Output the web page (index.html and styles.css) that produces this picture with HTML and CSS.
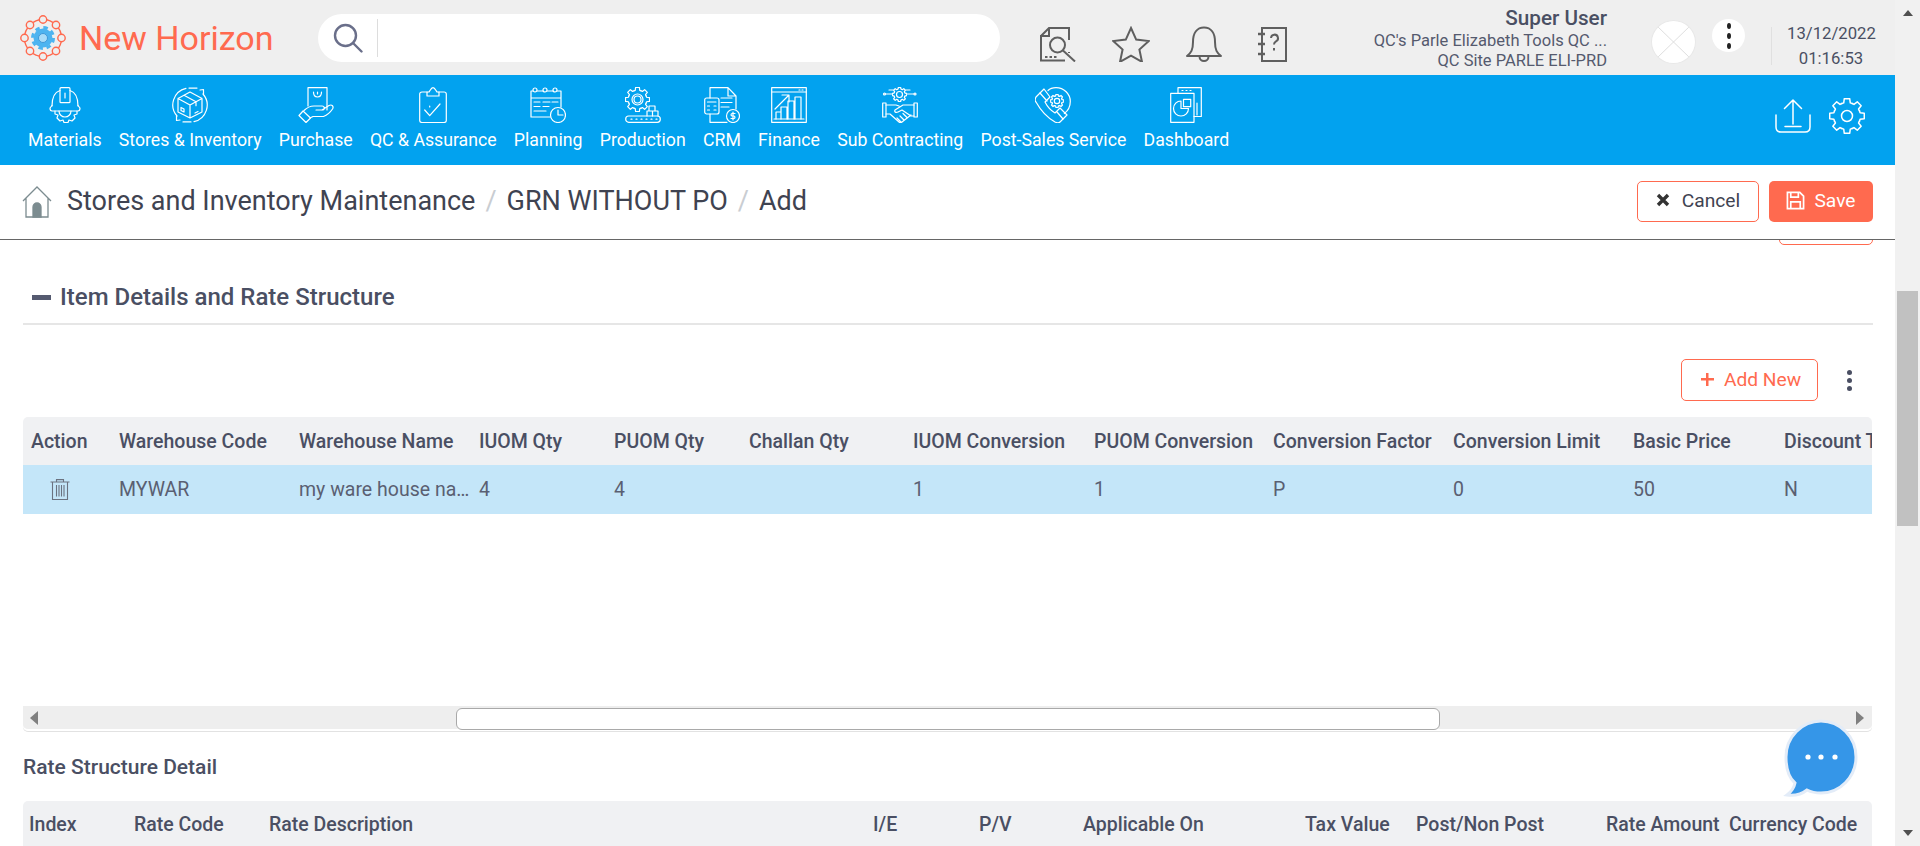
FILE: index.html
```html
<!DOCTYPE html>
<html lang="en">
<head>
<meta charset="utf-8">
<title>GRN WITHOUT PO</title>
<link rel="stylesheet" href="styles.css">
</head>
<body>
<svg class="defs" aria-hidden="true">
  <symbol id="cog" viewBox="0 0 36 36">
    <g class="cog-seg">
      <path id="cog-t" d="M12.830 5.530L14.730 4.900 15.260.720H20.740L21.270 4.900 23.170 5.530"/>
      <use href="#cog-t" transform="rotate(45 18 18)"/><use href="#cog-t" transform="rotate(90 18 18)"/><use href="#cog-t" transform="rotate(135 18 18)"/><use href="#cog-t" transform="rotate(180 18 18)"/><use href="#cog-t" transform="rotate(225 18 18)"/><use href="#cog-t" transform="rotate(270 18 18)"/><use href="#cog-t" transform="rotate(315 18 18)"/>
    </g>
  </symbol>
</svg>
<div class="app">
<header class="topbar">
  <div class="brand">
    <svg class="logo" viewBox="0 0 46 46" fill="none" stroke="#ff6a4f" stroke-width="1.400">
      <circle cx="23" cy="23" r="18.500"/>
      <g fill="#efefef"><circle cx="23" cy="4.500" r="3.700"/><circle cx="23" cy="41.500" r="3.700"/><circle cx="4.500" cy="23" r="3.700"/><circle cx="41.500" cy="23" r="3.700"/><circle cx="10" cy="10" r="3.700"/><circle cx="36" cy="10" r="3.700"/><circle cx="10" cy="36" r="3.700"/><circle cx="36" cy="36" r="3.700"/></g>
      <circle cx="23" cy="23" r="10.500" stroke="#4db4f0" stroke-width="3" stroke-dasharray="4.500 3.750"/>
      <circle cx="23" cy="23" r="9.500" fill="#4db4f0" stroke="none"/>
      <circle cx="23" cy="23" r="4.500" fill="#a9dcf8" stroke="#3f98d8" stroke-width="1"/>
    </svg>
    <span class="brand-name">New Horizon</span>
  </div>
  <div class="search">
    <svg class="search-icon" viewBox="0 0 30 30" fill="none" stroke="#6a6f8a" stroke-width="2.400"><circle cx="12.500" cy="12.500" r="10.500"/><path d="M20 20l8.500 8.500" stroke-linecap="round"/></svg>
    <span class="search-sep"></span>
  </div>
  <div class="tools">
    <svg class="tool tool-doc" viewBox="0 0 37 36" fill="none" stroke="#5f5f5f" stroke-width="2"><path d="M1 10L9 2H29V14M29 26V27M25 34.500H1V10H9V2"/><circle cx="17.500" cy="19" r="7.500"/><path d="M23 24.500L35 35.500"/><path d="M5 31h2.500M9.500 31H12M14 31h2.500"/></svg>
    <svg class="tool tool-star" viewBox="0 0 38 36" fill="none" stroke="#5f5f5f" stroke-width="2"><path d="M19 2l5.200 11.600 12.600 1.400-9.400 8.500 2.600 12.400L19 29.600 8 35.900l2.600-12.400L1.200 15l12.600-1.400z"/></svg>
    <svg class="tool tool-bell" viewBox="0 0 36 36" fill="none" stroke="#5f5f5f" stroke-width="2" stroke-linejoin="round"><path d="M1 30c4-3 6-6 6-14C7 7 11 1.500 18 1.500S29 7 29 16c0 8 2 11 6 14z"/><path d="M13.500 30.500a4.500 4.500 0 0 0 9 0"/></svg>
    <svg class="tool tool-book" viewBox="0 0 30 36" fill="none" stroke="#5f5f5f" stroke-width="2"><path d="M4 2h24v33H4z"/><path d="M0 8h7M0 18h7M0 28h7" stroke-width="2.400"/><path d="M13 12a3.500 3.500 0 1 1 5 3.300c-1.200.7-2 1.500-2 3.200"/><path d="M16 22v2.500"/></svg>
  </div>
  <div class="user">
    <div class="user-name">Super User</div>
    <div class="user-line">QC's Parle Elizabeth Tools QC ...</div>
    <div class="user-line">QC Site PARLE ELI-PRD</div>
  </div>
  <div class="avatar">
    <svg viewBox="0 0 45 44" fill="none" stroke="#dcdcdc" stroke-width="1"><path d="M6 6l33 32M39 6L6 38"/></svg>
  </div>
  <div class="kebab-round"><i></i><i></i><i></i></div>
  <div class="clock"><div>13/12/2022</div><div>01:16:53</div></div>
</header>

<nav class="mainnav">
  <a class="nav-item"><svg viewBox="0 0 32 36" class="ni w32"><path d="M11 3.500C6 5 3 10 3 19M21 3.500C26 5 29 10 29 19"/><rect x="11" y=".7" width="10" height="15" rx="1"/><path d="M16 6v5"/><path d="M3 18.500L1 21c0 2 1 3 2 3h26c1 0 2-1 2-3l-2-2.500"/><path d="M6 24v3l3 1-1 3 3 3 3-1 1 2.500h4l1-2.500 3 1 3-3-1-3 3-1v-3M10 24a6 6 0 0 0 12 0"/></svg><span>Materials</span></a>
  <a class="nav-item"><svg viewBox="0 0 36 36" class="ni w36"><path d="M14 1.300A17 17 0 0 0 5 29M22 34.700A17 17 0 0 0 31 7"/><path d="M17 1.100h8M28 3l3.500-.5V7M19 34.900h-8M8 33l-3.500.5V29"/><path d="M18 5l12 6.500V25l-12 6-12-6V11.500zM6 11.500L18 18l12-6.500M18 18v13M12 8.200l12 6.500v4"/><path d="M9 20.500v3l3 1.500v-3zM23 26l3-1.500"/></svg><span>Stores &amp; Inventory</span></a>
  <a class="nav-item"><svg viewBox="0 0 36 36" class="ni w36"><path d="M10 19V.7H29V23"/><path d="M15.500 5c0 3 1.500 5 4 5s4-2 4-5M19.500 5v2"/><path d="M1 28.500l4-4.500 7.500 7-4.500 4.500z"/><path d="M6 23.500C9 20.500 12 19 16 19h8c3 0 3 4 0 4h-6M24 23l7-4.500c3-1.500 5 1 3.500 3.500-2 3-5 6-9 7.500H15l-3 1.500"/></svg><span>Purchase</span></a>
  <a class="nav-item"><svg viewBox="0 0 28 36" class="ni w28"><path d="M8 5H3C1.500 5 .7 6 .7 7v26.500c0 1 1 2 2.300 2h22c1.300 0 2.300-1 2.300-2V7c0-1-.8-2-2.300-2h-5"/><path d="M8 9V5h2c1-1 2-4.300 4-4.300S17 4 18 5h2v4z"/><path d="M5.700 23l5 5.700L21 17M10.700 19v1"/></svg><span>QC &amp; Assurance</span></a>
  <a class="nav-item"><svg viewBox="0 0 36 36" class="ni w36"><path d="M20 30H1V4H31V20M1 11H31"/><circle cx="5" cy="3" r="2" class="fb"/><circle cx="15" cy="3" r="2" class="fb"/><circle cx="25" cy="3" r="2" class="fb"/><path d="M4 15h6M13 15h7M22 15h6M4 19.500h6M13 19.500h6M4 24h12"/><circle cx="28" cy="28" r="7.500"/><path d="M28 23v5h5"/></svg><span>Planning</span></a>
  <a class="nav-item"><svg viewBox="0 0 36 36" class="ni w36"><use href="#cog" x="0" y="0" width="25" height="25"/><circle cx="12.500" cy="12.500" r="5.500"/><circle cx="12.500" cy="12.500" r="3.500"/><rect x=".7" y="29" width="34.600" height="6.300" rx="3"/><path d="M6 32.200h1M11 32.200h1M16 32.200h1M21 32.200h1M26 32.200h1M31 32.200h1"/><path d="M22 29v-5h5.500v5M27.500 29v-5H33v5M24 24v-5h6v5"/></svg><span>Production</span></a>
  <a class="nav-item"><svg viewBox="0 0 36 36" class="ni w36"><path d="M6 11V.7H24L32 9V22M24 .7V9H32M23 35.300H6V27"/><rect x=".7" y="11" width="14.300" height="16" rx="2"/><path d="M3.500 15h8.500M3.500 19h2M10 19h2M3.500 23h2M10 23h2M17 11h11M17 15.500h11M17 20h8"/><circle cx="29" cy="29" r="6.500"/><path d="M31 26.500h-3a1.300 1.300 0 0 0 0 2.500h2a1.300 1.300 0 0 1 0 2.500h-3M29 25v8"/></svg><span>CRM</span></a>
  <a class="nav-item"><svg viewBox="0 0 36 36" class="ni w36"><rect x=".7" y=".7" width="34.600" height="34.600"/><path d="M.7 5H35.300M28 3h1M31 3h1M3 32H33"/><path d="M5 32V25h5v7M10 32V20h6v12M17 32V14h6v18M24 32V10h6v22"/><path d="M4 22L17 9M11 8h7v7"/></svg><span>Finance</span></a>
  <a class="nav-item"><svg viewBox="0 0 36 36" class="ni w36"><use href="#cog" x="10" y="0" width="15" height="15"/><circle cx="17.500" cy="7.500" r="3"/><path d="M3 7h7M25 7h7M7 3h4M24 3h4"/><circle cx="2.500" cy="7" r="1"/><circle cx="33" cy="7" r="1"/><rect x=".7" y="16" width="3.300" height="14"/><rect x="32" y="16" width="3.300" height="14"/><path d="M4 18h10l3 1M32 18H21l-8 5c-1 2 1 3 3 2l4-2 9 6h3M4 27h4l9 8c1 1 2 1 3 0l9-7M19 35l-4-4M22 33l-4-4M25 30.500l-4-4"/></svg><span>Sub Contracting</span></a>
  <a class="nav-item"><svg viewBox="0 0 36 36" class="ni w36"><path d="M9 2L1 10C0 12 0 14 1 15c5 9 12 16 19 20 2 1 4 1 5 0l7-7-7-7-5 5c-5-3-8-7-10-11l5-5z"/><path d="M5 6l7 8M22 25l6 7"/><path d="M13 3.500C15 1.500 18 .7 21 .7 29 .7 35.300 7 35.300 14.500c0 5-2 9-6 12"/><use href="#cog" x="15" y="7" width="14" height="14"/><circle cx="22" cy="14" r="2.700"/></svg><span>Post-Sales Service</span></a>
  <a class="nav-item"><svg viewBox="0 0 32 36" class="ni w32"><rect x=".7" y="6.300" width="23.300" height="29"/><path d="M8 6V.7H31.300V29.500H24M12 3.500h1M16 3.500h1M20 3.500h1M27 16v12"/><path d="M11 14a7.500 7.500 0 1 0 7.500 7.500H11z"/><path d="M13.500 12.300h7.200v7.400h-7.200z"/></svg><span>Dashboard</span></a>
  <div class="nav-actions">
    <svg class="na na-up" viewBox="0 0 36 34"><path d="M18 25V1M9.500 9.500L18 1l8.500 8.500M10 27.500h16M1 16v12c0 3 2 5 5 5h24c3 0 5-2 5-5V16"/></svg>
    <svg class="na na-gear" viewBox="0 0 36 36"><use href="#cog"/><circle cx="18" cy="18" r="5.500"/></svg>
  </div>
</nav>

<div class="crumbbar">
  <svg class="home" viewBox="0 0 30 32" fill="none" stroke="#7c8c90" stroke-width="1.300"><path d="M1 15L15 1l14 14M4 12v19h22V12"/><path d="M11 31V21a4 4 0 0 1 8 0v10z" fill="#7c8c90"/></svg>
  <span class="crumb">Stores and Inventory Maintenance</span><span class="slash">/</span><span class="crumb">GRN WITHOUT PO</span><span class="slash">/</span><span class="crumb">Add</span>
  <div class="crumb-actions">
    <button class="btn btn-outline"><svg class="btn-x" viewBox="0 0 14 14"><path d="M2 2l10 10M12 2L2 12"/></svg>Cancel</button>
    <button class="btn btn-solid"><svg class="btn-save" viewBox="0 0 20 20" fill="none" stroke="#fff" stroke-width="1.800"><path d="M1.500 1.500h13l4 4v13h-17z"/><path d="M5 1.500v5h8v-5M5 18.500v-7h10v7"/></svg>Save</button>
  </div>
</div>

<main class="content">
  <div class="cutoff"></div>
  <div class="section-head"><span class="minus"></span><h2>Item Details and Rate Structure</h2></div>
  <div class="grid-tools">
    <button class="btn-add"><span class="plus"></span>Add New</button>
    <div class="kebab"><i></i><i></i><i></i></div>
  </div>
  <div class="table-wrap">
    <div class="row head items-row">
      <span class="c c-action">Action</span><span class="c c-wc">Warehouse Code</span><span class="c c-wn">Warehouse Name</span><span class="c c-iq">IUOM Qty</span><span class="c c-pq">PUOM Qty</span><span class="c c-cq">Challan Qty</span><span class="c c-ic">IUOM Conversion</span><span class="c c-pc">PUOM Conversion</span><span class="c c-cf">Conversion Factor</span><span class="c c-cl">Conversion Limit</span><span class="c c-bp">Basic Price</span><span class="c c-dt">Discount T</span>
    </div>
    <div class="row body items-row">
      <span class="c c-action"><svg class="trash" viewBox="0 0 20 21" fill="none" stroke="#6b7280" stroke-width="1.100"><path d="M.5 3h19M6.500 3V.6h7V3M2.500 3v17.500h15V3M6.500 6v11.500M9 6v11.500M11.500 6v11.500M14 6v11.500"/></svg></span><span class="c c-wc">MYWAR</span><span class="c c-wn">my ware house na…</span><span class="c c-iq">4</span><span class="c c-pq">4</span><span class="c c-cq"></span><span class="c c-ic">1</span><span class="c c-pc">1</span><span class="c c-cf">P</span><span class="c c-cl">0</span><span class="c c-bp">50</span><span class="c c-dt">N</span>
    </div>
    <div class="blank"></div>
    <div class="hscroll">
      <span class="arr arr-l"></span>
      <div class="hthumb"></div>
      <span class="arr arr-r"></span>
    </div>
  </div>
  <h3 class="sub">Rate Structure Detail</h3>
  <div class="row head rate-row">
    <span class="c">Index</span><span class="c">Rate Code</span><span class="c">Rate Description</span><span class="c">I/E</span><span class="c">P/V</span><span class="c">Applicable On</span><span class="c">Tax Value</span><span class="c">Post/Non Post</span><span class="c">Rate Amount</span><span class="c">Currency Code</span>
  </div>
</main>
<aside class="chat"><svg viewBox="0 0 76 78"><path d="M38 2c19 0 35 16 35 36S57 74 38 74c-5 0-10-1-14-3-5 4-12 6-20 5 4-3 7-7 8-12C5 58 3 48 3 38 3 18 19 2 38 2z" fill="#3596e8" stroke="#e3ecf8" stroke-width="3"/><g fill="#fff"><circle cx="25" cy="38" r="2.600"/><circle cx="38" cy="38" r="2.600"/><circle cx="52" cy="38" r="2.600"/></g></svg></aside>
</div>
<div class="vscroll"><span class="va va-up"></span><div class="vthumb"></div><span class="va va-down"></span></div>
</body>
</html>
```
FILE: styles.css
```css
* { box-sizing: border-box; }
html, body { margin: 0; height: 846px; overflow: hidden; background: #fff; }
body { display: flex; font-family: Roboto, "Liberation Sans", sans-serif; color: #4a4f63; position: relative; }
.defs { position: absolute; width: 0; height: 0; }
.cog-seg { fill: none; vector-effect: non-scaling-stroke; }
.cog-seg path { vector-effect: non-scaling-stroke; }
.app { width: 1895px; flex: none; height: 846px; overflow: hidden; position: relative; }

.topbar { height: 75px; width: 1920px; background: #efefef; display: flex; align-items: flex-start; position: relative; }
.brand { display: flex; align-items: center; margin: 15px 0 0 20px; width: 298px; flex: none; }
.logo { width: 46px; height: 46px; flex: none; }
.brand-name { font-size: 34px; color: #ff6a4f; margin-left: 13px; line-height: 46px; }
.search { width: 682px; height: 48px; margin-top: 14px; background: #fff; border-radius: 24px; display: flex; align-items: center; padding-left: 15px; flex: none; }
.search-icon { width: 30px; height: 30px; }
.search-sep { width: 1px; height: 38px; background: #ddd; margin-left: 14px; }
.tools { display: flex; margin: 26px 0 0 40px; align-items: center; flex: none; }
.tool { height: 36px; flex: none; }
.tool-doc { width: 37px; }
.tool-star { width: 38px; margin-left: 35px; }
.tool-bell { width: 36px; margin-left: 36px; }
.tool-book { width: 30px; margin-left: 36px; }
.user { width: 319px; text-align: right; flex: none; }
.user-name { font-size: 20.700px; font-weight: 500; line-height: 25px; margin-top: 6px; color: #4a4f63; }
.user-line { font-size: 16.500px; line-height: 20px; color: #555a6e; white-space: nowrap; }
.avatar { width: 45px; height: 44px; border-radius: 50%; background: #fff; margin: 20px 0 0 44px; flex: none; border: 1px solid #e8e8e8; overflow: hidden; }
.avatar svg { display: block; width: 100%; height: 100%; }
.kebab-round { width: 33px; height: 33px; border-radius: 50%; background: #fff; margin: 19px 0 0 16px; display: flex; flex-direction: column; align-items: center; justify-content: center; gap: 4px; flex: none; }
.kebab-round i { width: 4px; height: 6px; border-radius: 50%; background: #222; }
.clock { margin: 27px 0 0 26px; border-left: 1px solid #e0e0e0; height: 38px; width: 103px; padding-left: 15px; font-size: 16.700px; color: #4a4f63; flex: none; }
.clock div { line-height: 25px; text-align: center; width: 88px; }
.clock div:first-child { margin-top: -6px; }

.mainnav { height: 90px; width: 100%; background: #02a2ef; display: flex; padding: 12px 0 0 28px; gap: 17.250px; position: relative; }
.nav-item { display: flex; flex-direction: column; align-items: center; color: #fff; font-size: 17.700px; flex: none; }
.nav-item span { margin-top: 7px; line-height: 20px; white-space: nowrap; }
.ni { height: 36px; flex: none; fill: none; stroke: #fff; stroke-width: 1.200; stroke-linejoin: round; stroke-linecap: round; }
.ni.w28 { width: 28px; }
.ni.w32 { width: 32px; }
.ni.w36 { width: 36px; }
.fb { fill: #02a2ef; }
.nav-actions { margin-left: auto; display: flex; padding: 12px 30px 0 0; gap: 18px; align-items: flex-start; }
.na { fill: none; stroke: #fff; stroke-width: 1.500; stroke-linecap: round; stroke-linejoin: round; }
.na-up { width: 36px; height: 34px; }
.na-gear { width: 36px; height: 36px; margin-top: -1px; }

.crumbbar { height: 75px; display: flex; align-items: center; padding: 0 22px; border-bottom: 1px solid #666; font-size: 27px; color: #3f4351; position: relative; z-index: 1; background: #fff; }
.home { width: 30px; height: 32px; margin-right: 15px; flex: none; }
.crumb { white-space: nowrap; position: relative; top: -1px; }
.slash { color: #c9cdd2; margin: 0 10px; position: relative; top: -1px; }
.crumb-actions { margin-left: auto; display: flex; gap: 10px; padding-bottom: 2px; }
.btn { height: 41px; padding: 0 0 2px; border-radius: 5px; font: 400 19.200px Roboto, "Liberation Sans", sans-serif; display: flex; align-items: center; justify-content: center; }
.btn-outline { width: 122px; background: #fff; border: 1px solid #ff6a4f; color: #3f4351; }
.btn-x { width: 14px; height: 14px; margin-right: 12px; fill: none; stroke: #333; stroke-width: 3.400; }
.btn-solid { width: 104px; background: #ff6a4f; border: 0; color: #fff; }
.btn-save { width: 19px; height: 19px; margin-right: 9px; }

.content { position: relative; padding: 0 23px; height: 606px; }
.cutoff { position: absolute; right: 22px; top: -30px; width: 94px; height: 35px; border: 1px solid #ff6a4f; border-radius: 5px; }
.section-head { height: 85px; padding: 40px 0 0 9px; display: flex; align-items: flex-start; border-bottom: 2px solid #e6e6e6; width: 1850px; }
.minus { width: 19px; height: 5px; background: #555a70; margin-top: 15px; }
.section-head h2 { margin: 0 0 0 9px; font-size: 24px; font-weight: 500; line-height: 34px; color: #4a4f63; }
.grid-tools { display: flex; justify-content: flex-end; height: 92px; padding: 34px 0 0; width: 1850px; }
.btn-add { width: 137px; height: 42px; padding: 0 0 2px 3px; border: 1px solid #ff6a4f; border-radius: 5px; background: #fff; color: #ff6a4f; font: 400 19.200px Roboto, "Liberation Sans", sans-serif; display: flex; align-items: center; justify-content: center; }
.plus { width: 13px; height: 13px; margin-right: 10px; background: linear-gradient(#ff6a4f, #ff6a4f) center / 100% 2.500px no-repeat, linear-gradient(#ff6a4f, #ff6a4f) center / 2.500px 100% no-repeat; }
.kebab { width: 55px; display: flex; flex-direction: column; align-items: flex-end; padding: 11px 21px 0 0; gap: 3px; }
.kebab i { width: 5px; height: 5px; border-radius: 50%; background: #4a4f63; }
.table-wrap { width: 1849px; overflow: hidden; }
.row { display: flex; align-items: center; width: 1849px; font-size: 19.500px; white-space: nowrap; overflow: hidden; }
.head { height: 48px; background: #f0f1f3; border-radius: 5px 5px 0 0; font-weight: 500; color: #4a4f63; }
.body { height: 49px; background: #c4e6f9; color: #5a5f72; }
.c { flex: none; display: block; }
.items-row .c { padding-left: 8px; }
.c-action { width: 88px; }
.c-wc { width: 180px; }
.c-wn { width: 180px; }
.c-iq, .c-pq { width: 135px; }
.c-cq { width: 164px; }
.c-ic { width: 181px; }
.c-pc { width: 179px; }
.c-cf { width: 180px; }
.c-cl { width: 180px; }
.c-bp { width: 151px; }
.c-dt { width: 120px; }
.trash { width: 20px; height: 21px; display: block; margin: 0 0 0 27px; }
.items-row.body .c-action { padding-left: 0; }
.blank { height: 192px; }
.hscroll { height: 26px; background: #eee; border-bottom: 1px solid #e2e2e2; border-radius: 0 0 5px 5px; position: relative; box-shadow: inset 0 -2px 0 #fff; display: flex; align-items: center; justify-content: space-between; padding: 0 8px 2px 7px; }
.hthumb { position: absolute; left: 433px; top: 2px; width: 984px; height: 22px; background: #fff; border: 1px solid #a9a9a9; border-radius: 6px; }
.arr { width: 0; height: 0; border-top: 7px solid transparent; border-bottom: 7px solid transparent; }
.arr-l { border-right: 8px solid #808080; }
.arr-r { border-left: 8px solid #808080; }
.sub { margin: 0; font-size: 21px; font-weight: 500; line-height: 24px; padding-top: 23px; height: 69px; color: #4a4f63; }
.rate-row { height: 45px; padding-top: 2px; }
.rate-row .c:nth-child(1) { margin-left: 6px; width: 105px; }
.rate-row .c:nth-child(2) { width: 135px; }
.rate-row .c:nth-child(3) { width: 604px; }
.rate-row .c:nth-child(4) { width: 106px; }
.rate-row .c:nth-child(5) { width: 104px; }
.rate-row .c:nth-child(6) { width: 222px; }
.rate-row .c:nth-child(7) { width: 111px; }
.rate-row .c:nth-child(8) { width: 190px; }
.rate-row .c:nth-child(9) { width: 123px; }
.chat { position: absolute; left: 1783px; top: 719px; width: 76px; height: 78px; z-index: 2; }
.chat svg { width: 76px; height: 78px; display: block; }

.vscroll { width: 25px; height: 846px; background: #f1f1f1; position: relative; flex: none; display: flex; flex-direction: column; align-items: center; justify-content: space-between; padding: 10px 0; }
.vthumb { position: absolute; left: 2px; top: 291px; width: 21px; height: 235px; background: #c1c1c1; }
.va { width: 0; height: 0; border-left: 5px solid transparent; border-right: 5px solid transparent; }
.va-up { border-bottom: 6px solid #505050; }
.va-down { border-top: 6px solid #505050; }
```
